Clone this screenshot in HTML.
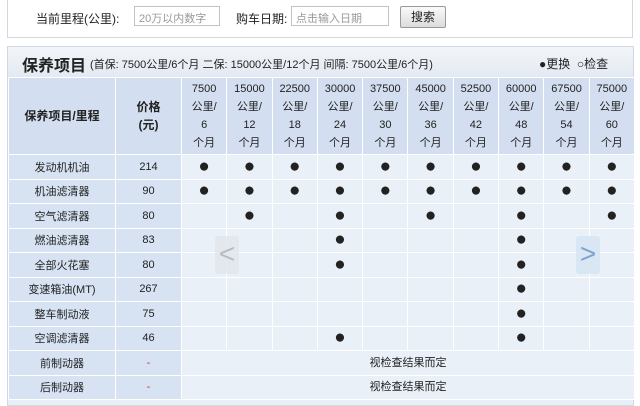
<!DOCTYPE html>
<html><head><meta charset="utf-8"><style>
*{margin:0;padding:0;box-sizing:border-box}
body{width:640px;height:400px;overflow:hidden;background:#fff;font-family:"Liberation Sans","Noto Sans CJK SC","WenQuanYi Zen Hei",sans-serif;font-size:11px;color:#222;position:relative}
.top{position:absolute;left:7px;top:-2px;width:626px;height:40px;border:1px solid #d4d8de;background:#fff}
.top span{position:absolute;top:11px;font-size:12px;color:#222}
.inp{position:absolute;top:7px;height:20px;border:1px solid #bfc4cc;color:#999;font-size:11px;padding:3px 4px}
.btn{position:absolute;left:392px;top:7px;width:46px;height:22px;border:1px solid #999;border-radius:2px;background:linear-gradient(#fafafa,#dcdcdc);font-size:12px;text-align:center;line-height:20px}
.panel{position:absolute;left:7px;top:46px;width:627px;height:360px;background:#e9eff7;border:1px solid #cfd8e4}
.title{position:absolute;left:0;top:0;width:100%;height:30px;background:linear-gradient(#f2f5f9,#e4eaf2)}
table{position:absolute;left:0;top:30px;width:626px;border-collapse:collapse;table-layout:fixed}
td{border:1px solid #fff;text-align:center;height:24.5px;padding:0;font-size:11px}
.l{background:#d7e3f3}
.h td{background:#d3dff0;line-height:18px;height:77px}
.d{background:#eaf0f7;font-size:19px;line-height:12px}
.arr{position:absolute;width:24px;height:38px;background:rgba(225,230,235,.8);border-radius:3px;font-size:28px;text-align:center;line-height:36px}
</style></head><body>
<div class="top">
<span style="left:28px">当前里程(公里):</span>
<div class="inp" style="left:126px;width:86px">20万以内数字</div>
<span style="left:228px">购车日期:</span>
<div class="inp" style="left:283px;width:98px">点击输入日期</div>
<div class="btn">搜索</div>
</div>
<div class="panel">
<div class="title"><span style="position:absolute;left:14px;top:5px;font-size:16px;font-weight:bold">保养项目</span><span style="position:absolute;left:82px;top:9px;font-size:11px">(首保: 7500公里/6个月 二保: 15000公里/12个月 间隔: 7500公里/6个月)</span><span style="position:absolute;left:531px;top:8px;font-size:12px">●更换 &nbsp;○检查</span></div>
<table>
<colgroup><col style="width:107px"><col style="width:66px"><col span="10" style="width:45.3px"></colgroup>
<tr class="h"><td style="font-weight:bold;font-size:12px">保养项目/里程</td><td style="font-weight:bold;font-size:12px">价格<br>(元)</td>
<td>7500<br>公里/<br>6<br>个月</td><td>15000<br>公里/<br>12<br>个月</td><td>22500<br>公里/<br>18<br>个月</td><td>30000<br>公里/<br>24<br>个月</td><td>37500<br>公里/<br>30<br>个月</td><td>45000<br>公里/<br>36<br>个月</td><td>52500<br>公里/<br>42<br>个月</td><td>60000<br>公里/<br>48<br>个月</td><td>67500<br>公里/<br>54<br>个月</td><td>75000<br>公里/<br>60<br>个月</td></tr>
<tr><td class="l">发动机机油</td><td class="l">214</td><td class="d">●</td><td class="d">●</td><td class="d">●</td><td class="d">●</td><td class="d">●</td><td class="d">●</td><td class="d">●</td><td class="d">●</td><td class="d">●</td><td class="d">●</td></tr>
<tr><td class="l">机油滤清器</td><td class="l">90</td><td class="d">●</td><td class="d">●</td><td class="d">●</td><td class="d">●</td><td class="d">●</td><td class="d">●</td><td class="d">●</td><td class="d">●</td><td class="d">●</td><td class="d">●</td></tr>
<tr><td class="l">空气滤清器</td><td class="l">80</td><td class="d"></td><td class="d">●</td><td class="d"></td><td class="d">●</td><td class="d"></td><td class="d">●</td><td class="d"></td><td class="d">●</td><td class="d"></td><td class="d">●</td></tr>
<tr><td class="l">燃油滤清器</td><td class="l">83</td><td class="d"></td><td class="d"></td><td class="d"></td><td class="d">●</td><td class="d"></td><td class="d"></td><td class="d"></td><td class="d">●</td><td class="d"></td><td class="d"></td></tr>
<tr><td class="l">全部火花塞</td><td class="l">80</td><td class="d"></td><td class="d"></td><td class="d"></td><td class="d">●</td><td class="d"></td><td class="d"></td><td class="d"></td><td class="d">●</td><td class="d"></td><td class="d"></td></tr>
<tr><td class="l">变速箱油(MT)</td><td class="l">267</td><td class="d"></td><td class="d"></td><td class="d"></td><td class="d"></td><td class="d"></td><td class="d"></td><td class="d"></td><td class="d">●</td><td class="d"></td><td class="d"></td></tr>
<tr><td class="l">整车制动液</td><td class="l">75</td><td class="d"></td><td class="d"></td><td class="d"></td><td class="d"></td><td class="d"></td><td class="d"></td><td class="d"></td><td class="d">●</td><td class="d"></td><td class="d"></td></tr>
<tr><td class="l">空调滤清器</td><td class="l">46</td><td class="d"></td><td class="d"></td><td class="d"></td><td class="d">●</td><td class="d"></td><td class="d"></td><td class="d"></td><td class="d">●</td><td class="d"></td><td class="d"></td></tr>
<tr><td class="l">前制动器</td><td class="l" style="color:#c33">-</td><td class="d" colspan="10" style="font-size:11px">视检查结果而定</td></tr>
<tr><td class="l">后制动器</td><td class="l" style="color:#c33">-</td><td class="d" colspan="10" style="font-size:11px">视检查结果而定</td></tr>
</table>
</div>
<div class="arr" style="left:215px;top:236px;color:#bbb">&lt;</div>
<div class="arr" style="left:576px;top:236px;color:#7fa3cc;background:rgba(215,228,242,.9)">&gt;</div>
</body></html>
